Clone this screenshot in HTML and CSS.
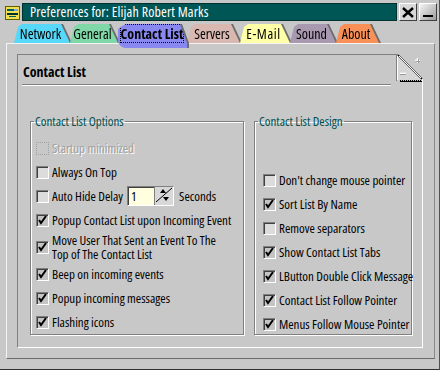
FILE: index.html
```html
<!DOCTYPE html>
<html lang="en">
<head>
    <meta charset="UTF-8">
    <title>Preferences</title>
    <link rel="stylesheet" href="styles.css">
</head>
<body>
    <div class="window">
        <div class="titlebar">
            <svg class="app-icon" width="15" height="14" viewBox="0 0 15 14">
                <rect x="0.5" y="0.5" width="14" height="13" fill="#f0e050" stroke="#606000"/>
                <rect x="2" y="3" width="7" height="2" fill="#006060"/>
                <rect x="2" y="7" width="11" height="2" fill="#003030"/>
                <rect x="9" y="3" width="4" height="2" fill="#80a0f0"/>
                <rect x="4" y="10" width="7" height="1" fill="#006060"/>
            </svg>
            <div class="caption">Preferences for: Elijah Robert Marks</div>
            <div class="tb-btn">
                <svg width="12" height="11" viewBox="0 0 12 11"><path d="M1 1 L11 10 M11 1 L1 10" stroke="#000" stroke-width="2.4"/></svg>
            </div>
            <div class="tb-btn tb-min">
                <svg width="12" height="11" viewBox="0 0 12 11"><rect x="1" y="8" width="10" height="2" fill="#000"/></svg>
            </div>
        </div>

        <div class="tabs">
            <div class="tab tab-network"><span class="tab-face">Network</span></div>
            <div class="tab tab-general"><span class="tab-face">General</span></div>
            <div class="tab tab-contact active"><span class="tab-face"><span class="focus">Contact List</span></span></div>
            <div class="tab tab-servers"><span class="tab-face">Servers</span></div>
            <div class="tab tab-email"><span class="tab-face">E-Mail</span></div>
            <div class="tab tab-sound"><span class="tab-face">Sound</span></div>
            <div class="tab tab-about"><span class="tab-face">About</span></div>
        </div>

        <div class="frame">
            <div class="panel">
                <div class="panel-head">Contact List</div>
                <svg class="fold" width="27" height="29" viewBox="0 0 27 29">
                    <rect x="0" y="0" width="27" height="29" fill="#c8c8c8"/>
                    <path d="M0 0.5 H2" stroke="#808080"/>
                    <polygon points="1,2 25,26 1,26" fill="#d6d6d6"/>
                    <path d="M0.5 1 V27" stroke="#808080"/>
                    <path d="M1.5 2 V26" stroke="#ffffff"/>
                    <path d="M2 1 L26 25" stroke="#000" stroke-width="1.4"/>
                    <path d="M3 2 L25 24" stroke="#ffffff"/>
                    <path d="M4 26.5 H26" stroke="#000" stroke-dasharray="1 1"/>
                    <path d="M4 27.5 H26" stroke="#000"/>
                    <path d="M26.5 25 V29" stroke="#ffffff"/>
                    <path d="M19 6.5 H24 M21.5 4 V9" stroke="#ffffff" stroke-width="1.4"/>
                    <path d="M19.5 7.5 H24 M22.5 5 V9" stroke="#9a9a9a"/>
                    <path d="M4 19.5 H10" stroke="#ffffff" stroke-width="1.6"/>
                    <path d="M4 20.5 H10" stroke="#9a9a9a"/>
                </svg>

                <div class="groups">
                    <fieldset class="group group-options">
                        <legend>Contact List Options</legend>
                        <div class="row disabled"><span class="box"></span><span>Startup minimized</span></div>
                        <div class="row"><span class="box"></span><span>Always On Top</span></div>
                        <div class="row">
                            <span class="box"></span><span>Auto Hide Delay</span>
                            <span class="spin">
                                <span class="spin-edit">1</span>
                                <span class="spin-btn">
                                    <svg width="18" height="16" viewBox="0 0 18 16">
                                        <path d="M1 15 L17 1" stroke="#000"/>
                                        <path d="M5 6 L8 2 L11 6 Z" fill="#000"/>
                                        <path d="M8 10 L11 14 L14 10 Z" fill="#000"/>
                                    </svg>
                                </span>
                            </span>
                            <span class="seconds">Seconds</span>
                        </div>
                        <div class="row"><span class="box checked"></span><span>Popup Contact List upon Incoming Event</span></div>
                        <div class="row row-tall"><span class="box checked"></span><span>Move User That Sent an Event To The<br>Top of The Contact List</span></div>
                        <div class="row"><span class="box checked"></span><span>Beep on incoming events</span></div>
                        <div class="row"><span class="box checked"></span><span>Popup incoming messages</span></div>
                        <div class="row"><span class="box checked"></span><span>Flashing icons</span></div>
                    </fieldset>

                    <fieldset class="group group-design">
                        <legend>Contact List Design</legend>
                        <div class="row"><span class="box"></span><span>Don't change mouse pointer</span></div>
                        <div class="row"><span class="box checked"></span><span>Sort List By Name</span></div>
                        <div class="row"><span class="box"></span><span>Remove separators</span></div>
                        <div class="row"><span class="box checked"></span><span>Show Contact List Tabs</span></div>
                        <div class="row"><span class="box checked"></span><span>LButton Double Click Message</span></div>
                        <div class="row"><span class="box checked"></span><span>Contact List Follow Pointer</span></div>
                        <div class="row"><span class="box checked"></span><span>Menus Follow Mouse Pointer</span></div>
                    </fieldset>
                </div>
            </div>
        </div>
    </div>
</body>
</html>
```

FILE: styles.css
```css
body {
    margin: 0;
    font-family: "Open Sans", "Liberation Sans", sans-serif;
    font-stretch: 75%;
    font-size: 13px;
    color: #000;
    background: #c8c8c8;
}
.window {
    width: 440px;
    height: 370px;
    box-sizing: border-box;
    background: #c8c8c8;
    border-right: 1px solid #505050;
    border-bottom: 1px solid #303030;
    overflow: hidden;
}

/* title bar */
.titlebar {
    display: flex;
    align-items: center;
    height: 18px;
    margin-top: 3px;
    padding-left: 5px;
}
.app-icon {
    margin-right: 2px;
    margin-top: 2px;
}
.caption {
    flex: 1;
    height: 18px;
    box-sizing: border-box;
    background: #005555;
    border: 1px solid #003030;
    color: #fff;
    font-size: 14px;
    letter-spacing: 0.15px;
    line-height: 16px;
    padding-left: 7px;
}
.tb-btn {
    width: 18px;
    height: 18px;
    box-sizing: border-box;
    margin-left: 2px;
    display: flex;
    align-items: center;
    justify-content: center;
    background: #d8d8d8;
    border: 1px solid;
    border-color: #ffffff #404040 #404040 #ffffff;
}
.tb-min {
    background: linear-gradient(135deg, #f4f4f4, #9c9c9c);
    margin-right: 2px;
}

/* tabs */
.tabs {
    display: flex;
    align-items: flex-end;
    height: 19px;
    margin-top: 3px;
    padding-left: 14px;
    position: relative;
    z-index: 2;
}
.tab {
    filter: drop-shadow(2px 0 0 #6c6c6c);
}
.tab-face {
    display: block;
    box-sizing: border-box;
    height: 19px;
    line-height: 19px;
    font-size: 14px;
    padding-right: 3px;
    text-align: center;
    clip-path: polygon(0 100%, 4px 3px, 8px 0, calc(100% - 9px) 0, 100% 100%);
}
.tab-network .tab-face { width: 56px; background: #58d8f8; }
.tab-general .tab-face { width: 48px; background: #80d8a8; }
.tab-contact .tab-face { width: 69px; background: #8888f0; }
.tab-servers .tab-face { width: 53px; background: #d8b8b0; }
.tab-email .tab-face { width: 50px; background: #ffffa8; letter-spacing: 0.6px; }
.tab-sound .tab-face { width: 46px; background: #a898b0; }
.tab-about .tab-face { width: 43px; background: #f89058; }
.tab.active {
    margin-bottom: -5px;
    position: relative;
    z-index: 3;
}
.tab.active .tab-face {
    height: 24px;
    line-height: 20px;
    font-weight: bold;
    padding-right: 1px;
    border-radius: 0 0 0 8px;
    clip-path: polygon(0 100%, 0 5px, 4px 2px, 8px 0, calc(100% - 7px) 0, 100% 19px, 100% 100%);
}
.focus {
    outline: 1px dotted #000;
    outline-offset: -1px;
    padding: 0 1px;
}

/* page frame */
.frame {
    margin-left: 6px;
    width: 429px;
    box-sizing: border-box;
    padding: 10px 11px 10px 10px;
    border: 1px solid;
    border-color: #f4f4f4 #8a8a8a #6a6a6a #f4f4f4;
}
.panel {
    position: relative;
    height: 294px;
    box-sizing: border-box;
    border: 1px solid;
    border-color: #808080 #ffffff #ffffff #808080;
    padding: 8px 11px 0 4px;
}
.panel-head {
    font-weight: bold;
    font-size: 14px;
    line-height: 18px;
    padding: 0 0 3px 1px;
    margin-right: 20px;
    border-bottom: 1px solid #808080;
    box-shadow: 0 1px 0 #fff;
}
.fold {
    position: absolute;
    top: -1px;
    right: -1px;
}

/* group boxes */
.groups {
    display: grid;
    grid-template-columns: 214px 158px;
    column-gap: 10px;
    margin: 29px 0 0 8px;
}
.group {
    min-width: 0;
    margin: 0;
    border: 1px solid #808080;
    box-shadow: 1px 1px 0 #fff, inset 1px 1px 0 #fff;
    height: 221px;
    box-sizing: border-box;
    padding: 8px 0 0 5px;
}
.group legend {
    color: #005050;
    font-size: 13px;
    padding: 0 1px;
    margin-left: -2px;
    line-height: 14px;
}
.group-design {
    padding: 40px 0 0 8px;
}
.group-design legend {
    margin-left: -5px;
}
.row {
    display: flex;
    align-items: center;
    height: 24px;
    white-space: nowrap;
}
.row-tall {
    height: 30px;
    line-height: 14px;
}
.box {
    flex: none;
    width: 13px;
    height: 13px;
    box-sizing: border-box;
    margin-right: 3px;
    background: #dcdcdc;
    border: 1px solid;
    border-color: #808080 #ffffff #ffffff #808080;
    box-shadow: inset 1px 1px 0 #404040;
}
.box.checked {
    background: #c4c4c4 url("data:image/svg+xml,%3Csvg xmlns='http://www.w3.org/2000/svg' width='11' height='11'%3E%3Cpath d='M2 5 L4 8 L9 1' fill='none' stroke='%23000' stroke-width='2'/%3E%3C/svg%3E") no-repeat 0 0;
}
.disabled {
    color: #a0a0a0;
    text-shadow: 1px 1px 0 #fff;
}
.disabled .box {
    background: #c8c8c8;
    border: 1px dotted #a0a0a0;
    box-shadow: none;
}

/* spin edit */
.spin {
    display: flex;
    height: 18px;
    margin-left: 4px;
    border: 1px solid;
    border-color: #808080 #ffffff #ffffff #808080;
}
.spin-edit {
    width: 26px;
    background: #ffffe0;
    box-shadow: inset 1px 1px 0 #404040;
    line-height: 18px;
    padding-left: 3px;
    box-sizing: border-box;
}
.spin-btn {
    width: 18px;
    display: flex;
    background: #d8d8d8;
    border-left: 1px solid #808080;
}
.seconds {
    margin-left: 5px;
}
```
